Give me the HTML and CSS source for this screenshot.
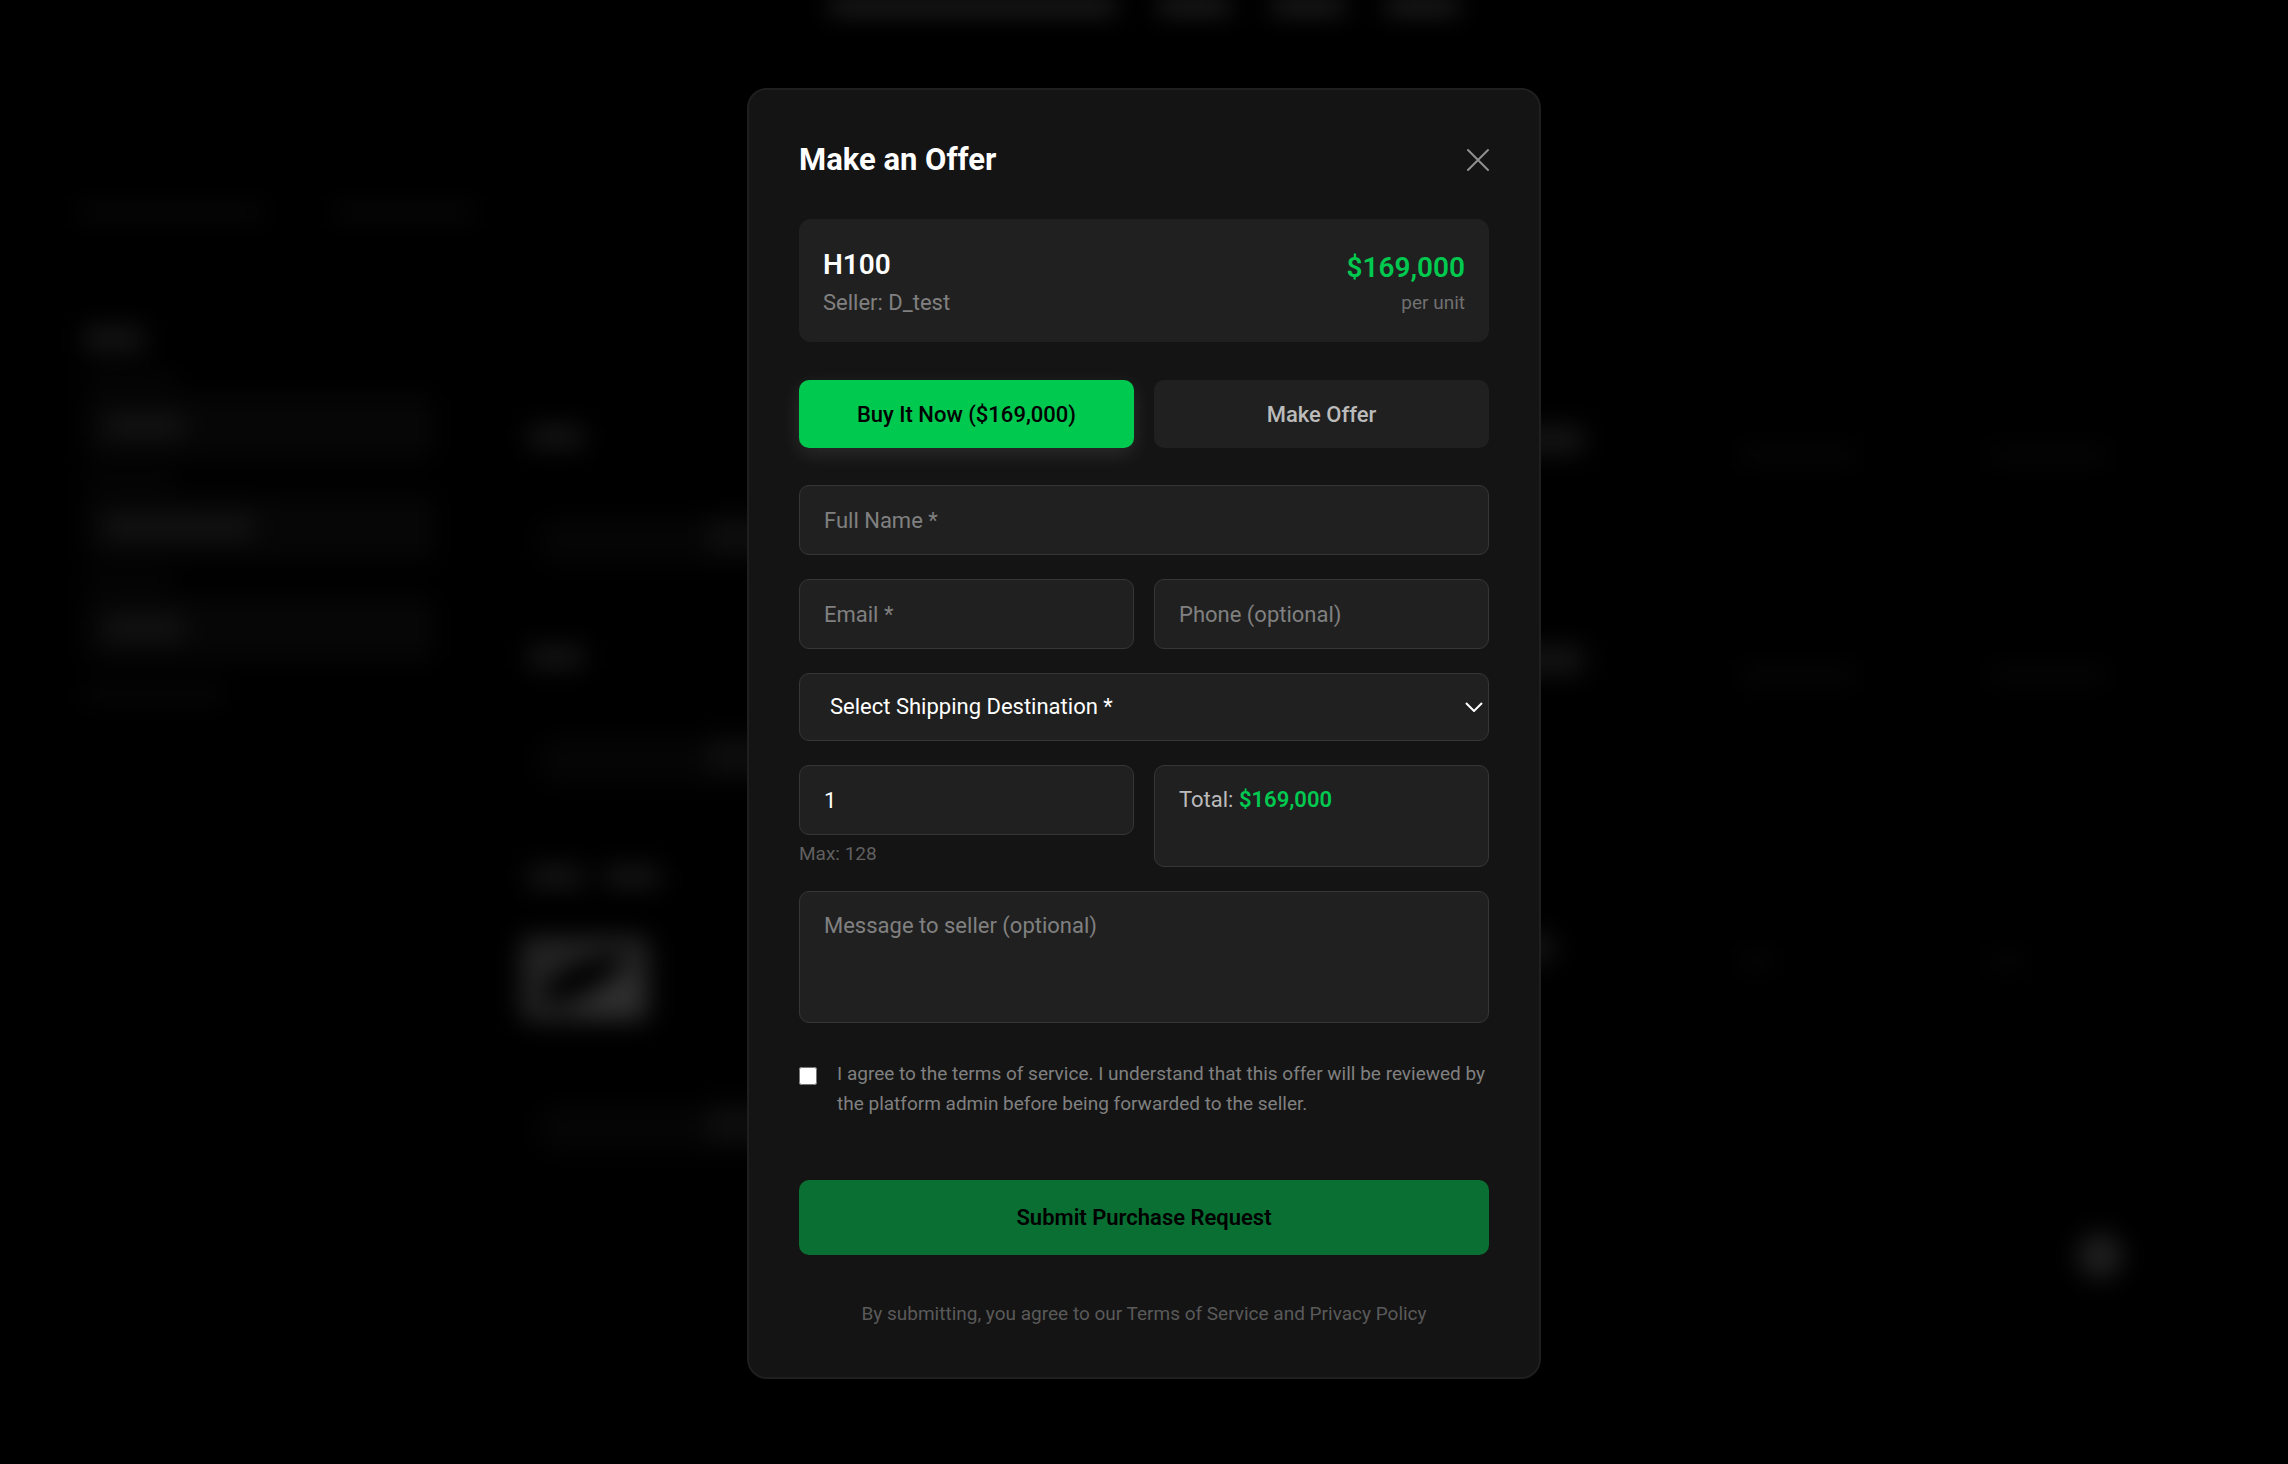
FILE: index.html
```html
<!DOCTYPE html>
<html lang="en">

<head>
    <meta charset="UTF-8">
    <meta name="viewport" content="width=device-width, initial-scale=1.0">
    <title>Make an Offer</title>
    <link rel="stylesheet" href="styles.css">
</head>

<body>

    <!-- Marketplace page, dimmed and blurred behind the modal -->
    <div class="page" aria-hidden="true">
        <div class="hero">
            <span class="word word-xl"></span>
            <span class="word"></span>
            <span class="word"></span>
            <span class="word"></span>
        </div>
        <div class="crumbs">
            <span class="crumb crumb-wide"></span>
            <span class="crumb"></span>
        </div>
        <div class="columns">
            <div class="filters">
                <div class="filter-title"></div>
                <div class="filter-label"></div>
                <div class="filter"><span class="filter-value"></span></div>
                <div class="filter-label"></div>
                <div class="filter"><span class="filter-value wide"></span></div>
                <div class="filter-label"></div>
                <div class="filter"><span class="filter-value"></span></div>
                <div class="filter-reset"></div>
            </div>
            <div class="listings">
                <div class="listing">
                    <div class="listing-main">
                        <div class="listing-name"><span></span></div>
                        <div class="listing-bar"><span></span></div>
                    </div>
                    <div class="listing-price"></div>
                    <div class="listing-info"></div>
                    <div class="listing-info"></div>
                </div>
                <div class="listing">
                    <div class="listing-main">
                        <div class="listing-name"><span></span></div>
                        <div class="listing-bar"><span></span></div>
                    </div>
                    <div class="listing-price"></div>
                    <div class="listing-info"></div>
                    <div class="listing-info"></div>
                </div>
                <div class="listing listing-tall">
                    <div class="listing-main">
                        <div class="listing-name"><span></span><span></span></div>
                        <svg class="listing-photo" viewBox="0 0 130 86">
                            <rect width="130" height="86" rx="10" fill="#222" />
                            <path d="M20 58 Q40 26 104 16 Q100 46 32 68 Z" fill="#000" />
                            <path d="M66 66 L118 32 V78 H52 Z" fill="#303030" />
                        </svg>
                        <div class="listing-bar"><span></span></div>
                    </div>
                    <div class="listing-price"></div>
                    <div class="listing-info short"></div>
                    <div class="listing-info short"></div>
                </div>
            </div>
        </div>
        <div class="chat-bubble"></div>
    </div>

    <div class="overlay">
        <div class="modal" role="dialog" aria-labelledby="modal-title">
            <div class="modal-header">
                <h2 id="modal-title">Make an Offer</h2>
                <button class="close" type="button" aria-label="Close">
                    <svg width="24" height="24" viewBox="0 0 24 24">
                        <path d="M3 2 L23 22 M23 2 L3 22" />
                    </svg>
                </button>
            </div>

            <div class="product">
                <div>
                    <h3>H100</h3>
                    <p class="seller">Seller: D_test</p>
                </div>
                <div class="product-price">
                    <div class="price">$169,000</div>
                    <div class="unit">per unit</div>
                </div>
            </div>

            <div class="row modes">
                <button class="mode active" type="button">Buy It Now ($169,000)</button>
                <button class="mode" type="button">Make Offer</button>
            </div>

            <form class="offer-form">
                <input class="field" type="text" placeholder="Full Name *" aria-label="Full Name">
                <div class="row">
                    <input class="field" type="email" placeholder="Email *" aria-label="Email">
                    <input class="field" type="tel" placeholder="Phone (optional)" aria-label="Phone">
                </div>
                <div class="select-wrap">
                    <select class="field" aria-label="Shipping destination">
                        <option>Select Shipping Destination *</option>
                    </select>
                    <svg class="chevron" width="18" height="10" viewBox="0 0 18 10">
                        <path d="M1 1 L9 9 L17 1" />
                    </svg>
                </div>
                <div class="row">
                    <div>
                        <input class="field" id="quantity" type="number" value="1" min="1" max="128" aria-label="Quantity">
                        <p class="hint">Max: 128</p>
                    </div>
                    <div class="field total">Total: <strong>$169,000</strong></div>
                </div>
                <textarea class="field message" placeholder="Message to seller (optional)" aria-label="Message to seller"></textarea>

                <div class="agree">
                    <input type="checkbox" id="agree">
                    <label for="agree">I agree to the terms of service. I understand that this offer will be reviewed by the platform admin before being forwarded to the seller.</label>
                </div>

                <button class="submit" type="submit" disabled>Submit Purchase Request</button>
            </form>

            <p class="legal">By submitting, you agree to our Terms of Service and Privacy Policy</p>
        </div>
    </div>

</body>

</html>
```
FILE: styles.css
```css
* {
    box-sizing: border-box;
}

body {
    margin: 0;
    min-height: 100vh;
    background-color: #000;
    color: #fff;
    font-family: Roboto, 'Liberation Sans', sans-serif;
    overflow: hidden;
}

h2,
h3,
p {
    margin: 0;
}

button,
input,
select,
textarea {
    font-family: inherit;
}

/* Page behind the modal */
.page {
    height: 100vh;
    overflow: hidden;
    filter: blur(12px);
}

.hero {
    display: flex;
    justify-content: center;
    gap: 42px;
    height: 204px;
}

.word {
    width: 72px;
    height: 12px;
    background-color: #2c2c2c;
}

.word-xl {
    width: 286px;
}

.crumbs {
    display: flex;
    gap: 70px;
    padding-left: 78px;
}

.crumb {
    width: 140px;
    height: 16px;
    background-color: #080808;
}

.crumb-wide {
    width: 186px;
}

.columns {
    display: flex;
    gap: 86px;
    padding: 106px 170px 0 84px;
}

.filters {
    width: 350px;
}

.filter-title {
    width: 60px;
    height: 26px;
    margin-bottom: 20px;
    background-color: #141414;
}

.filter-label {
    width: 90px;
    height: 16px;
    margin: 6px 0;
    background-color: #060606;
}

.filter {
    height: 66px;
    margin-bottom: 13px;
    padding: 20px;
    border-radius: 12px;
    background-color: #060606;
}

.filter-value {
    display: block;
    width: 80px;
    height: 24px;
    background-color: #131313;
}

.filter-value.wide {
    width: 150px;
}

.filter-reset {
    width: 140px;
    height: 20px;
    margin-top: 22px;
    background-color: #060606;
}

.listings {
    flex: 1;
    padding-top: 100px;
}

.listing {
    display: grid;
    grid-template-columns: 968px 250px 250px 1fr;
    height: 220px;
}

.listing-tall {
    height: 364px;
}

.listing-name {
    display: flex;
    gap: 20px;
    height: 92px;
    padding-left: 8px;
}

.listing-name span {
    width: 56px;
    height: 22px;
    background-color: #151515;
}

.listing-tall .listing-name {
    height: 70px;
}

.listing-photo {
    display: block;
    width: 130px;
    height: 86px;
    margin-bottom: 84px;
}

.listing-bar {
    display: flex;
    justify-content: flex-end;
    width: 300px;
    height: 46px;
    margin-left: 16px;
    border-radius: 23px;
    background-color: #050505;
}

.listing-bar span {
    width: 130px;
    height: 34px;
    background-color: #0e0e0e;
}

.listing-price {
    width: 96px;
    height: 28px;
    background-color: #141414;
}

.listing-info {
    width: 116px;
    height: 14px;
    margin: 22px 0 0 2px;
    background-color: #070707;
}

.listing-tall .listing-price {
    width: 66px;
    margin-top: 68px;
}

.listing-tall .listing-info {
    width: 34px;
    margin-top: 88px;
}

.chat-bubble {
    position: fixed;
    right: 165px;
    bottom: 185px;
    width: 46px;
    height: 46px;
    border-radius: 50%;
    background-color: #1e1e1e;
}

/* Modal */
.overlay {
    position: fixed;
    inset: 0;
    display: flex;
    align-items: center;
    justify-content: center;
    padding-top: 3px;
}

.modal {
    width: 794px;
    max-width: 100%;
    padding: 50px;
    border: 2px solid #1f1f1f;
    border-radius: 20px;
    background-color: #141414;
}

.modal-header {
    display: flex;
    align-items: center;
    justify-content: space-between;
    margin-bottom: 39px;
}

.modal-header h2 {
    font-size: 31px;
    line-height: 40px;
    font-weight: 700;
}

.close {
    display: flex;
    padding: 0;
    border: none;
    background: none;
    cursor: pointer;
}

.close path {
    fill: none;
    stroke: #909090;
    stroke-width: 2;
    stroke-linecap: round;
}

.product {
    display: flex;
    align-items: center;
    justify-content: space-between;
    padding: 24px;
    margin-bottom: 38px;
    border-radius: 12px;
    background-color: #202020;
}

.product h3 {
    font-size: 28px;
    line-height: 44px;
    font-weight: 600;
}

.seller {
    font-size: 22px;
    line-height: 31px;
    color: #808080;
}

.product-price {
    text-align: right;
}

.price {
    font-size: 28px;
    line-height: 44px;
    font-weight: 600;
    color: #00c950;
}

.unit {
    font-size: 19px;
    line-height: 26px;
    color: #707070;
}

.row {
    display: grid;
    grid-template-columns: 1fr 1fr;
    gap: 20px;
}

.modes {
    margin-bottom: 37px;
}

.mode {
    height: 68px;
    border: none;
    border-radius: 10px;
    background-color: #202020;
    color: #bbb;
    font-size: 22px;
    font-weight: 500;
    cursor: pointer;
}

.mode.active {
    background-color: #00c950;
    color: #000;
    box-shadow: 0 6px 20px rgba(255, 255, 255, 0.1);
}

.offer-form {
    display: flex;
    flex-direction: column;
    gap: 24px;
}

.field {
    display: block;
    width: 100%;
    height: 70px;
    padding: 21px 24px;
    border: 1px solid #363636;
    border-radius: 10px;
    background-color: #202020;
    color: #fff;
    font-size: 22px;
    line-height: 26px;
    outline: none;
}

.field::placeholder {
    color: #808080;
}

.select-wrap {
    position: relative;
}

select.field {
    height: 68px;
    padding: 0 30px;
    appearance: none;
}

.chevron {
    position: absolute;
    right: 6px;
    top: 29px;
    pointer-events: none;
}

.chevron path {
    fill: none;
    stroke: #fff;
    stroke-width: 2;
}

input[type="number"] {
    appearance: textfield;
}

.hint {
    margin-top: 6px;
    font-size: 19px;
    line-height: 26px;
    color: #606060;
}

.field.total {
    height: auto;
    color: #bbb;
}

.total strong {
    font-weight: 600;
    color: #00c950;
}

.field.message {
    height: 132px;
    resize: none;
}

.agree {
    display: flex;
    align-items: flex-start;
    gap: 20px;
    margin: 12px 0 37px;
    font-size: 19px;
    line-height: 30px;
    color: #808080;
}

.agree input {
    flex: none;
    width: 18px;
    height: 18px;
    margin: 8px 0 0;
}

.submit {
    height: 75px;
    border: none;
    border-radius: 10px;
    background-color: #0a6f32;
    color: #000;
    font-size: 22px;
    font-weight: 600;
}

.legal {
    margin-top: 46px;
    font-size: 19px;
    line-height: 26px;
    text-align: center;
    color: #5a5a5a;
}
```
